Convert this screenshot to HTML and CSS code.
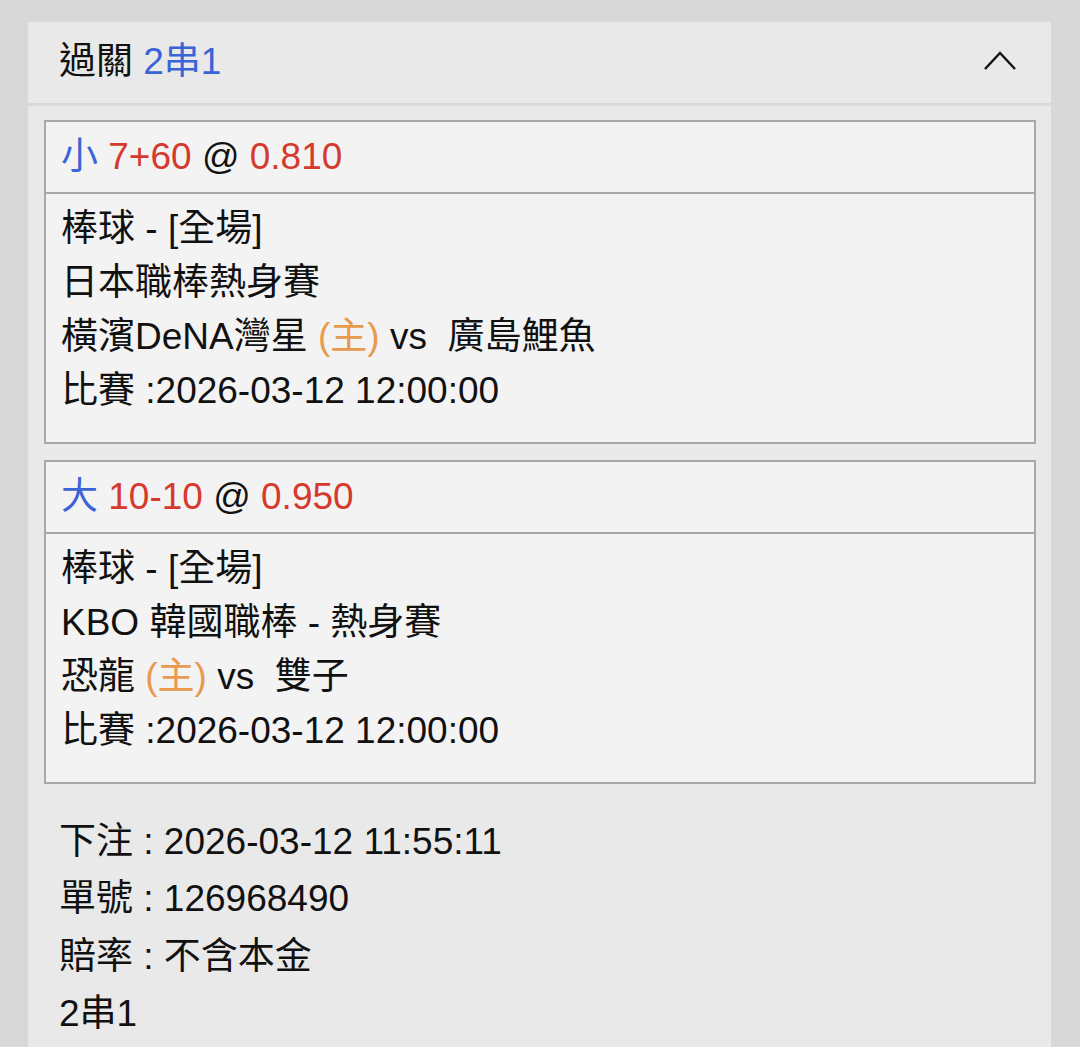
FILE: index.html
```html
<!DOCTYPE html>
<html lang="zh-Hant">
<head>
  <meta charset="UTF-8">
  <meta name="viewport" content="width=device-width, initial-scale=1.0">
  <title>過關 2串1</title>
  <link rel="stylesheet" href="styles.css">
</head>
<body>
  <div class="panel">
    <div class="panel-head">
      <div class="panel-title">過關 <span class="blue">2串1</span></div>
      <svg class="chevron" width="34" height="20" viewBox="0 0 34 20">
        <path d="M2 18 L17 2 L32 18" fill="none" stroke="#111" stroke-width="2.4"/>
      </svg>
    </div>
    <div class="panel-body">
      <div class="bet">
        <div class="bet-title"><span class="blue">小</span> <span class="red">7+60</span> @ <span class="red">0.810</span></div>
        <div class="bet-info">
          <div>棒球 - [全場]</div>
          <div>日本職棒熱身賽</div>
          <div>橫濱DeNA灣星 <span class="orange">(主)</span> vs&nbsp; 廣島鯉魚</div>
          <div>比賽 :2026-03-12 12:00:00</div>
        </div>
      </div>
      <div class="bet">
        <div class="bet-title"><span class="blue">大</span> <span class="red">10-10</span> @ <span class="red">0.950</span></div>
        <div class="bet-info">
          <div>棒球 - [全場]</div>
          <div>KBO 韓國職棒 - 熱身賽</div>
          <div>恐龍 <span class="orange">(主)</span> vs&nbsp; 雙子</div>
          <div>比賽 :2026-03-12 12:00:00</div>
        </div>
      </div>
      <div class="summary">
        <div>下注 : 2026-03-12 11:55:11</div>
        <div>單號 : 126968490</div>
        <div>賠率 : 不含本金</div>
        <div>2串1</div>
      </div>
    </div>
  </div>
</body>
</html>
```

FILE: styles.css
```css
* {
  margin: 0;
  padding: 0;
  box-sizing: border-box;
}

body {
  background-color: #d8d8d8;
  font-family: "Liberation Sans", "Noto Sans CJK TC", sans-serif;
  font-size: 37px;
  color: #111;
  padding: 22px 29px 0 28px;
}

.panel {
  background-color: #e9e9e9;
}

.panel-head {
  height: 84px;
  border-bottom: 3px solid #d9d9d9;
  display: flex;
  align-items: center;
  justify-content: space-between;
  padding: 0 34px 0 31px;
}
.panel-title {
  line-height: 1;
  margin-top: -2px;
}
.chevron {
  display: block;
  margin-top: -4px;
}

.panel-body {
  padding: 14px 15px 0 16px;
}

.bet {
  background-color: #f3f3f3;
  border: 2px solid #a8a8a8;
  margin-bottom: 16px;
}
.bet-title {
  line-height: 54px;
  padding: 8px 15px;
  border-bottom: 2px solid #a8a8a8;
}
.bet-info {
  line-height: 54px;
  padding: 8px 15px 24px;
}

.summary {
  line-height: 57.3px;
  padding: 13px 15px 40px;
}

.blue {
  color: #3a64d6;
}
.red {
  color: #d6392e;
}
.orange {
  color: #e89a4e;
}
```
